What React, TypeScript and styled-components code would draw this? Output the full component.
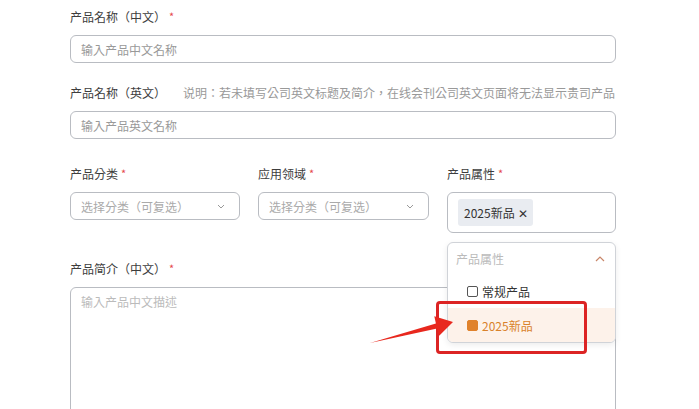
import React from "react";
import styled, { createGlobalStyle } from "styled-components";

const Global = createGlobalStyle`
  html, body { margin: 0; padding: 0; background: #fff; overflow: hidden; }
  body { font-family: "Noto Sans CJK TC", "Noto Sans CJK SC", "Noto Sans", sans-serif; color: #333; }
  * { box-sizing: border-box; }
`;

const Page = styled.div`
  position: relative;
  width: 699px;
  height: 409px;
  overflow: hidden;
  padding: 6px 0 0 70px;
`;

const Form = styled.div`
  width: 546px;
  display: flex;
  flex-direction: column;
`;

const Item = styled.div<{ $mb?: number }>`
  display: flex;
  flex-direction: column;
  margin-bottom: ${(p) => p.$mb ?? 0}px;
  position: relative;
`;

const LabelRow = styled.div`
  display: flex;
  align-items: center;
  height: 20px;
  margin-bottom: 9px;
  font-size: 12px;
  color: #3d3d3d;
  white-space: nowrap;
`;

const Star = styled.span`
  color: #e5484d;
  margin-left: 3px;
  font-size: 11px;
`;

const Note = styled.span`
  color: #999;
  margin-left: 17px;
  font-size: 12px;
`;

const Input = styled.div`
  height: 28px;
  border: 1px solid #b9bcc2;
  border-radius: 6px;
  display: flex;
  align-items: center;
  padding: 0 10px;
  font-size: 12px;
  color: #999;
`;

const Grid = styled.div`
  display: grid;
  grid-template-columns: 170px 171px 169px;
  column-gap: 18px;
  margin-bottom: 25px;
`;

const Select = styled.div<{ $tall?: boolean }>`
  height: ${(p) => (p.$tall ? 41 : 28)}px;
  border: 1px solid #b9bcc2;
  border-radius: 6px;
  display: flex;
  align-items: center;
  justify-content: space-between;
  padding: 0 ${(p) => (p.$tall ? 10 : 14)}px 0 10px;
  font-size: 12px;
  color: #aaa;
`;

const Tag = styled.div`
  height: 27px;
  padding: 0 5px 0 6px;
  background: #e9ecf1;
  border-radius: 3px;
  display: flex;
  align-items: center;
  gap: 3px;
  font-size: 12px;
  color: #333;
`;

const Close = styled.span`
  font-size: 12px;
  color: #333;
`;

const Dropdown = styled.div`
  position: absolute;
  left: 0;
  right: 0;
  top: calc(100% + 9px);
  background: #fff;
  border: 1px solid #d0d3d8;
  border-radius: 6px;
  box-shadow: 0 2px 6px rgba(0, 0, 0, 0.08);
  overflow: hidden;
  z-index: 2;
`;

const DropHead = styled.div`
  height: 31px;
  display: flex;
  align-items: center;
  justify-content: space-between;
  padding: 0 10px 0 8px;
  font-size: 12px;
  color: #bbb;
`;

const Option = styled.div<{ $active?: boolean }>`
  height: 34px;
  display: flex;
  align-items: center;
  gap: 4px;
  padding-left: 19px;
  font-size: 12px;
  color: ${(p) => (p.$active ? "#d9822b" : "#333")};
  background: ${(p) => (p.$active ? "#fdf2ea" : "#fff")};
`;

const Check = styled.span<{ $on?: boolean }>`
  width: 11px;
  height: 11px;
  border-radius: 2px;
  border: 1px solid ${(p) => (p.$on ? "#e0822c" : "#555")};
  background: ${(p) => (p.$on ? "#e0822c" : "#fff")};
  flex: none;
`;

const TextArea = styled.div`
  height: 160px;
  border: 1px solid #b9bcc2;
  border-radius: 6px;
  padding: 5px 10px;
  font-size: 12px;
  color: #bbb;
`;

const RedBox = styled.div`
  position: absolute;
  left: 436px;
  top: 301px;
  width: 151px;
  height: 53px;
  border: 3px solid #dc2424;
  border-radius: 4px;
  z-index: 3;
`;

const ArrowSvg = styled.svg`
  position: absolute;
  left: 360px;
  top: 305px;
  z-index: 3;
`;

const ChevronDown = ({ color = "#999" }: { color?: string }) => (
  <svg width="8" height="5" viewBox="0 0 8 5">
    <path d="M1 1 L4 4 L7 1" fill="none" stroke={color} strokeWidth="1" />
  </svg>
);

const ChevronUp = ({ color = "#c9876a" }: { color?: string }) => (
  <svg width="10" height="6" viewBox="0 0 10 6">
    <path d="M1 5 L5 1 L9 5" fill="none" stroke={color} strokeWidth="1.2" />
  </svg>
);

export default function App() {
  return (
    <>
      <Global />
      <Page>
        <Form>
          <Item $mb={19}>
            <LabelRow>
              产品名称（中文）<Star>*</Star>
            </LabelRow>
            <Input>输入产品中文名称</Input>
          </Item>
          <Item $mb={24}>
            <LabelRow>
              产品名称（英文）
              <Note>说明：若未填写公司英文标题及简介，在线会刊公司英文页面将无法显示贵司产品</Note>
            </LabelRow>
            <Input>输入产品英文名称</Input>
          </Item>
          <Grid>
            <Item>
              <LabelRow>
                产品分类<Star>*</Star>
              </LabelRow>
              <Select>
                选择分类（可复选）
                <ChevronDown />
              </Select>
            </Item>
            <Item>
              <LabelRow>
                应用领域<Star>*</Star>
              </LabelRow>
              <Select>
                选择分类（可复选）
                <ChevronDown />
              </Select>
            </Item>
            <Item>
              <LabelRow>
                产品属性<Star>*</Star>
              </LabelRow>
              <Select $tall>
                <Tag>
                  2025新品<Close>✕</Close>
                </Tag>
              </Select>
              <Dropdown>
                <DropHead>
                  产品属性
                  <ChevronUp />
                </DropHead>
                <Option>
                  <Check />
                  常规产品
                </Option>
                <Option $active>
                  <Check $on />
                  2025新品
                </Option>
              </Dropdown>
            </Item>
          </Grid>
          <Item>
            <LabelRow>
              产品简介（中文）<Star>*</Star>
            </LabelRow>
            <TextArea>输入产品中文描述</TextArea>
          </Item>
        </Form>
        <RedBox />
        <ArrowSvg width="100" height="50" viewBox="0 0 100 50">
          <polygon
            points="10,38 75.9,18.6 74.3,11.3 93,17 79.2,30.7 77.1,23.4"
            fill="#e8281e"
          />
        </ArrowSvg>
      </Page>
    </>
  );
}
